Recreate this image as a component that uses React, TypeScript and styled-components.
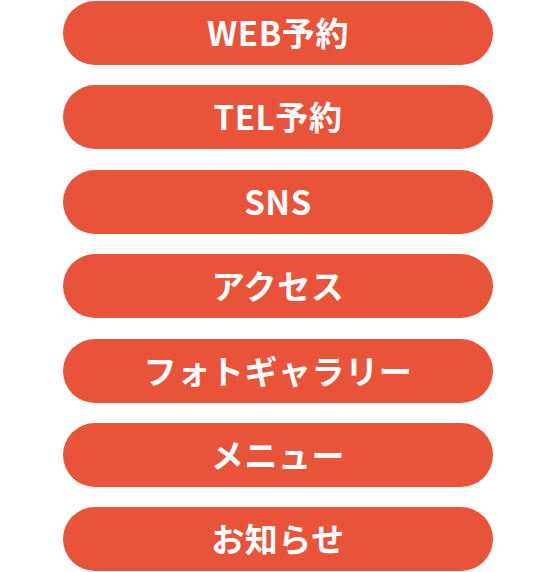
import React from "react";
import styled, { createGlobalStyle } from "styled-components";

const GlobalStyle = createGlobalStyle`
  html, body { margin: 0; padding: 0; background: #ffffff; }
  body { font-family: "Noto Sans CJK JP", "Noto Sans", sans-serif; }
`;

const Menu = styled.nav`
  display: flex;
  flex-direction: column;
  align-items: center;
  gap: 20.4px;
  padding-top: 1px;
  width: 556px;
`;

const MenuButton = styled.a`
  display: flex;
  align-items: center;
  justify-content: center;
  width: 430px;
  height: 64px;
  border-radius: 32px;
  background: #e9533a;
  color: #ffffff;
  font-family: "Noto Sans CJK JP", "Noto Sans", sans-serif;
  font-weight: 700;
  font-size: 33px;
  letter-spacing: 0.6px;
  text-decoration: none;
  line-height: 1;
  padding-bottom: 1px;
  box-sizing: border-box;
`;

const items = ["WEB予約", "TEL予約", "SNS", "アクセス", "フォトギャラリー", "メニュー", "お知らせ"];

export default function App() {
  return (
    <>
      <GlobalStyle />
      <Menu>
        {items.map((label) => (
          <MenuButton key={label} href="#">
            {label}
          </MenuButton>
        ))}
      </Menu>
    </>
  );
}
